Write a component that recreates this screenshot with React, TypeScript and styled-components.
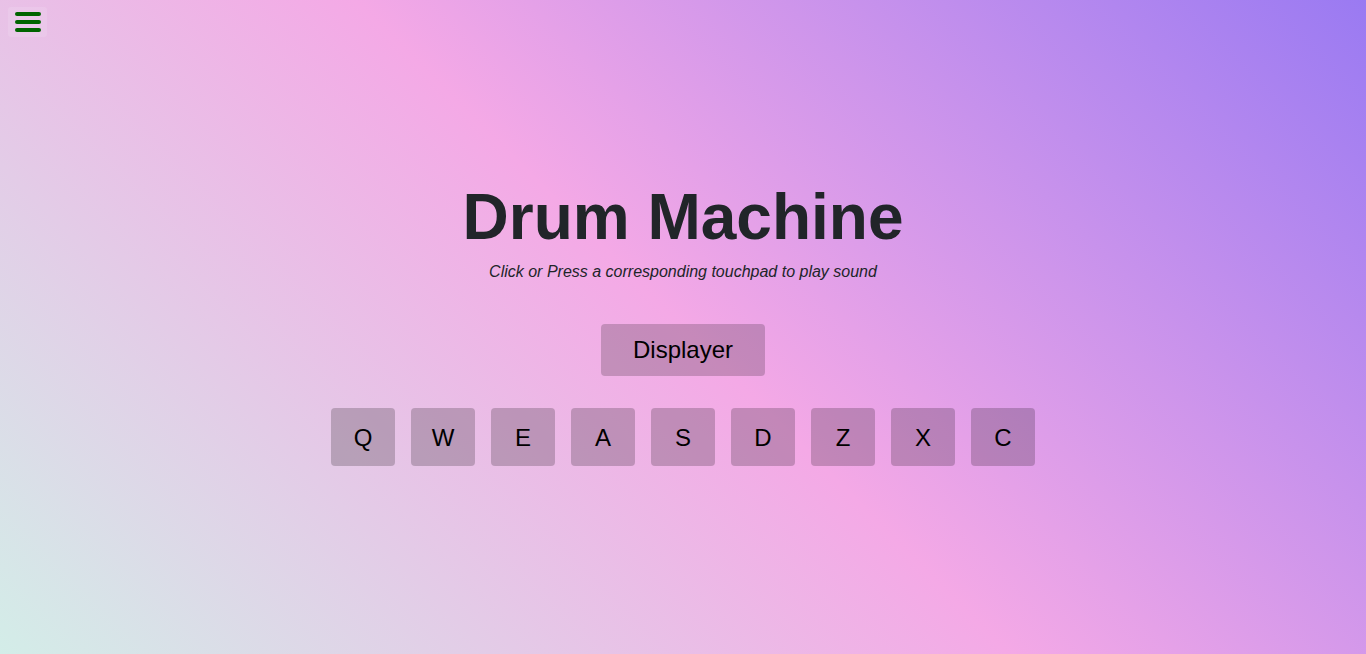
import React from "react";
import styled, { createGlobalStyle } from "styled-components";

const Global = createGlobalStyle`
  html, body { margin: 0; padding: 0; height: 100%; }
  body { font-family: "Liberation Sans", Arial, sans-serif; overflow: hidden; }
  #root { height: 100%; }
`;

const Page = styled.div`
  position: relative;
  width: 100%;
  height: 100vh;
  background: linear-gradient(45deg, #d3ede8 0%, #f4a9e6 50%, #9a7af2 100%);
  display: flex;
  flex-direction: column;
  align-items: center;
  padding-top: 179px;
  box-sizing: border-box;
`;

const MenuButton = styled.button`
  position: absolute;
  top: 7px;
  left: 8px;
  width: 39px;
  height: 30px;
  border: none;
  border-radius: 3px;
  background: rgba(255, 255, 255, 0.12);
  display: flex;
  flex-direction: column;
  align-items: center;
  justify-content: center;
  gap: 4px;
  padding: 0;
  cursor: pointer;
`;

const Bar = styled.span`
  display: block;
  width: 26px;
  height: 4px;
  border-radius: 2px;
  background: #006400;
`;

const Title = styled.h1`
  margin: 0;
  font-size: 64px;
  line-height: 77px;
  font-weight: 700;
  color: #212529;
`;

const Subtitle = styled.p`
  margin: 4px 0 0;
  font-size: 16px;
  line-height: 24px;
  font-style: italic;
  color: #212529;
`;

const Display = styled.div`
  margin-top: 40px;
  width: 164px;
  height: 52px;
  border-radius: 4px;
  background: rgba(0, 0, 0, 0.19);
  display: flex;
  align-items: center;
  justify-content: center;
  font-size: 24px;
  color: #000;
`;

const PadRow = styled.div`
  margin-top: 32px;
  display: flex;
  gap: 16px;
`;

const Pad = styled.button`
  width: 64px;
  height: 58px;
  border: none;
  border-radius: 4px;
  background: rgba(0, 0, 0, 0.2);
  font-family: "Liberation Sans", Arial, sans-serif;
  font-size: 24px;
  color: #000;
  padding: 2px 0 0;
  cursor: pointer;
`;

const keys = ["Q", "W", "E", "A", "S", "D", "Z", "X", "C"];

export default function App() {
  return (
    <>
      <Global />
      <Page>
        <MenuButton aria-label="menu">
          <Bar />
          <Bar />
          <Bar />
        </MenuButton>
        <Title>Drum Machine</Title>
        <Subtitle>Click or Press a corresponding touchpad to play sound</Subtitle>
        <Display>Displayer</Display>
        <PadRow>
          {keys.map((k) => (
            <Pad key={k}>{k}</Pad>
          ))}
        </PadRow>
      </Page>
    </>
  );
}
